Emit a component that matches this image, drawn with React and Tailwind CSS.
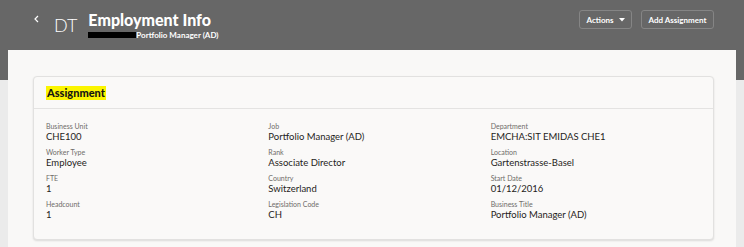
import React from 'react'

const fields = [
  [
    { label: 'Business Unit', value: 'CHE100' },
    { label: 'Worker Type', value: 'Employee' },
    { label: 'FTE', value: '1' },
    { label: 'Headcount', value: '1' },
  ],
  [
    { label: 'Job', value: 'Portfolio Manager (AD)' },
    { label: 'Rank', value: 'Associate Director' },
    { label: 'Country', value: 'Switzerland' },
    { label: 'Legislation Code', value: 'CH' },
  ],
  [
    { label: 'Department', value: 'EMCHA:SIT EMIDAS CHE1' },
    { label: 'Location', value: 'Gartenstrasse-Basel' },
    { label: 'Start Date', value: '01/12/2016' },
    { label: 'Business Title', value: 'Portfolio Manager (AD)' },
  ],
]

export default function App() {
  return (
    <div className="w-[744px] h-[247px] overflow-hidden bg-[#ebebeb] font-['Lato','Noto_Sans',sans-serif]">
      {/* Header band */}
      <div className="h-[80px] bg-[#676767]">
        <div className="flex items-start justify-between h-[50px] pl-[34px] pr-[30px]">
          <div className="flex items-start">
            <svg className="mt-[15px]" width="5" height="8" viewBox="0 0 5 8">
              <path d="M4 1L1 4l3 3" fill="none" stroke="#fff" strokeWidth="1.2" />
            </svg>
            <span className="ml-[15px] mt-[16px] text-[18px] text-white leading-none font-light">DT</span>
            <div className="ml-[11px] mt-[10px] flex flex-col">
              <span className="text-[16px] font-black text-white leading-[20px]">Employment Info</span>
              <div className="flex items-center mt-[1px]">
                <span className="w-[48px] h-[6px] bg-black" />
                <span className="text-[8px] font-bold text-white leading-none">Portfolio Manager (AD)</span>
              </div>
            </div>
          </div>
          <div className="flex items-center gap-[9px] mt-[10px]">
            <button className="h-[19px] w-[53px] flex items-center justify-center gap-[5px] border border-[#858585] rounded-[3px] text-[8px] font-bold text-white">
              Actions
              <svg width="6" height="4" viewBox="0 0 6 4"><path d="M0 0h6L3 3.5z" fill="#fff" /></svg>
            </button>
            <button className="h-[19px] w-[73px] flex items-center justify-center border border-[#858585] rounded-[3px] text-[8px] font-bold text-white">
              Add Assignment
            </button>
          </div>
        </div>
      </div>

      {/* Panel */}
      <div className="mx-[8px] -mt-[30px] h-[197px] bg-[#f9f8f7] pt-[26px] pl-[25px] pr-[22px]">
        <div className="h-[164px] bg-[#faf9f8] border border-[#e2e1e0] rounded-[4px] shadow-[0_1px_2px_rgba(0,0,0,0.12)]">
          <div className="h-[32px] flex items-center pl-[12px] border-b border-[#e4e3e2]">
            <span className="bg-[#fbf500] px-[1px] text-[11px] font-black text-[#161513] leading-[14px]">Assignment</span>
          </div>
          <div className="flex pl-[12px] pt-[13px]">
            {fields.map((col, i) => (
              <div key={i} className="w-[223px] flex flex-col gap-[6px]">
                {col.map(f => (
                  <div key={f.label} className="flex flex-col">
                    <span className="text-[7px] text-[#6f6c69] leading-[9px]">{f.label}</span>
                    <span className="text-[9.5px] text-[#1f1d1b] leading-[11px]">{f.value}</span>
                  </div>
                ))}
              </div>
            ))}
          </div>
        </div>
      </div>
    </div>
  )
}
